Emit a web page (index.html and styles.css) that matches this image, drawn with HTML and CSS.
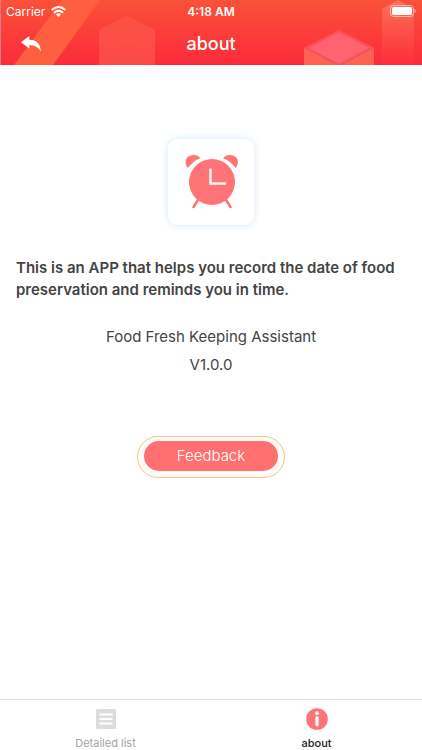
FILE: index.html
```html
<!DOCTYPE html>
<html lang="en">
<head>
<meta charset="utf-8">
<meta name="viewport" content="width=device-width, initial-scale=1">
<title>about</title>
<link rel="stylesheet" href="styles.css">
</head>
<body>
<header class="header">
  <svg class="header-art" viewBox="0 0 422 65" preserveAspectRatio="xMidYMax slice" aria-hidden="true">
    <defs>
      <linearGradient id="sky" x1="0" y1="0" x2="0" y2="1"><stop offset="0" stop-color="#fa5138"/><stop offset="1" stop-color="#fc2b3b"/></linearGradient>
      <linearGradient id="tower" x1="0" y1="0" x2="0" y2="1"><stop offset="0" stop-color="#ff8262" stop-opacity=".75"/><stop offset="1" stop-color="#ff5050" stop-opacity=".05"/></linearGradient>
      <linearGradient id="box" x1="0" y1="0" x2="0" y2="1"><stop offset="0" stop-color="#ff6450" stop-opacity=".5"/><stop offset="1" stop-color="#ff5a52" stop-opacity=".6"/></linearGradient>
    </defs>
    <rect width="422" height="65" fill="url(#sky)"/>
    <path d="M62 0H100L53 65H14Z" fill="#ff5f3f"/>
    <path d="M127 16L155 30V65H99V30Z" fill="url(#box)"/>
    <path d="M127 16L155 30L127 45L99 30Z" fill="#fb5046" opacity=".7"/>
    <path d="M339 30L374 48V65H304V48Z" fill="#ff6152"/>
    <path d="M339 30L374 48L342 65H336L304 48Z" fill="#f9505a"/>
    <path d="M339 32L369 48L339 64L309 48Z" fill="#ff6270"/>
    <path d="M398 0L414 9V65H382V9Z" fill="url(#tower)"/>
    <path d="M398 0L414 9L398 17L382 9Z" fill="#ff6d60" opacity=".6"/>
    <rect width="1" height="65" fill="#d77991"/>
  </svg>
  <div class="status">
    <div class="carrier"><span>Carrier</span>
      <svg width="15" height="11" viewBox="0 0 15 11" aria-hidden="true"><g fill="none" stroke="#fff" stroke-width="2"><path d="M.7 4Q7.500-1.900 14.300 4"/><path d="M3 6.700Q7.500 2.900 12 6.700"/></g><path d="M5 8.400Q7.500 6.300 10 8.400L7.500 11Z" fill="#fff"/></svg>
    </div>
    <div class="time">4:18 AM</div>
    <svg class="battery" width="26" height="12" viewBox="0 0 26 12" aria-hidden="true"><rect x=".5" y=".5" width="23" height="11" rx="3" fill="none" stroke="#fff" stroke-opacity=".55"/><rect x="2" y="2" width="20" height="8" rx="1.500" fill="#fff"/><path d="M24.500 4Q26 4.500 26 6T24.500 8Z" fill="#fff" fill-opacity=".55"/></svg>
  </div>
  <div class="navbar">
    <button class="back" type="button" aria-label="Back">
      <svg width="20" height="16" viewBox="0 0 20 16" aria-hidden="true"><path d="M0 6.200L8.300 0V3.700C15.500 3.900 19.800 8 19.800 15.600C17.300 11.200 13.700 9.300 8.300 9.300V12.500Z" fill="#fff"/></svg>
    </button>
    <h1 class="title">about</h1>
  </div>
</header>
<main class="content">
  <div class="app-icon">
    <svg width="54" height="56" viewBox="0 0 54 56" aria-hidden="true">
      <g fill="#ff7476"><path d="M4 14C-1.500 7.500 3 1 9.500 1C13 1 15.500 2.400 16.200 4.300Q8.500 7.500 4 14Z"/><path d="M51.500 14C57 7.500 52.500 1 46 1C42.500 1 40 2.400 39.300 4.300Q47 7.500 51.500 14Z"/><circle cx="28" cy="28" r="23"/></g>
      <path d="M14 46L9.500 53M42 46L46.500 53" stroke="#ff7476" stroke-width="2.600" stroke-linecap="round"/>
      <path d="M26.500 14.500V29.500H42" fill="none" stroke="#fff2f3" stroke-width="2.600"/>
    </svg>
  </div>
  <p class="intro">This is an APP that helps you record the date of food preservation and reminds you in time.</p>
  <p class="meta">Food Fresh Keeping Assistant</p>
  <p class="meta">V1.0.0</p>
  <button class="feedback" type="button"><span class="feedback-label">Feedback</span></button>
</main>
<nav class="tabs">
  <a class="tab" href="#list">
    <svg width="22" height="22" viewBox="0 0 22 22" aria-hidden="true"><rect x="1" y="1" width="20" height="20" rx="1.500" fill="#dcdcdc"/><path d="M4.500 6.500H17.500M4.500 11H17.500M4.500 15.500H17.500" stroke="#fff" stroke-width="2.200"/></svg>
    <span>Detailed list</span>
  </a>
  <a class="tab tab-active" href="#about" aria-current="page">
    <svg width="22" height="22" viewBox="0 0 22 22" aria-hidden="true"><circle cx="11" cy="11" r="10.800" fill="#ff7476"/><circle cx="11" cy="5.200" r="1.900" fill="#fff"/><path d="M11 9.800V16.800" stroke="#fff" stroke-width="3.200" stroke-linecap="round"/></svg>
    <span>about</span>
  </a>
</nav>
</body>
</html>
```
FILE: styles.css
```css
* { box-sizing: border-box; }

body {
  margin: 0;
  min-height: 100vh;
  display: flex;
  flex-direction: column;
  background: #fff;
  color: #444;
  font-family: Inter, "Liberation Sans", sans-serif;
}

button {
  border: 0;
  padding: 0;
  background: none;
  font: inherit;
  cursor: pointer;
}

svg { display: block; }

.header {
  position: relative;
  color: #fff;
  background: #fc2b3b;
}

.header-art {
  position: absolute;
  inset: 0;
  width: 100%;
  height: 100%;
}

.status,
.navbar {
  position: relative;
  display: grid;
  grid-template-columns: 1fr auto 1fr;
  align-items: center;
}

.status {
  height: 22px;
  padding: 0 6px;
  font-size: 12px;
}

.carrier {
  display: flex;
  align-items: center;
  gap: 6px;
}

.time { font-weight: 600; }

.battery { justify-self: end; }

.navbar {
  height: 43px;
  padding: 0 21px;
}

.back { justify-self: start; }

.title {
  margin: 0;
  font-size: 18px;
  font-weight: 500;
  line-height: 22px;
}

.content {
  flex: 1;
  display: flex;
  flex-direction: column;
  align-items: center;
  padding: 74px 16px 24px;
}

.app-icon {
  display: grid;
  place-items: center;
  width: 86px;
  height: 86px;
  border-radius: 9px;
  background: #fff;
  box-shadow: 0 0 9px #d3e8f6;
}

.intro {
  align-self: stretch;
  margin: 32px 0 22px;
  font-size: 15px;
  font-weight: 600;
  line-height: 22px;
}

.meta {
  margin: 0;
  font-size: 15px;
  line-height: 28px;
}

.feedback {
  margin-top: 57px;
  padding: 4px 6px 6px;
  border: 1px solid #f5c978;
  border-radius: 21px;
  background: #fffafa;
  color: #fff;
}

.feedback-label {
  display: block;
  padding: 0 33px;
  border-radius: 15px;
  background: #ff7070;
  font-size: 15px;
  font-weight: 300;
  line-height: 30px;
}

.tabs {
  display: flex;
  border-top: 1px solid #dedede;
}

.tab {
  flex: 1;
  display: flex;
  flex-direction: column;
  align-items: center;
  gap: 6px;
  padding: 8px 0 0;
  color: #a3a3a3;
  font-size: 11px;
  line-height: 14px;
  text-decoration: none;
}

.tab-active {
  color: #222;
  font-weight: 500;
}
```
